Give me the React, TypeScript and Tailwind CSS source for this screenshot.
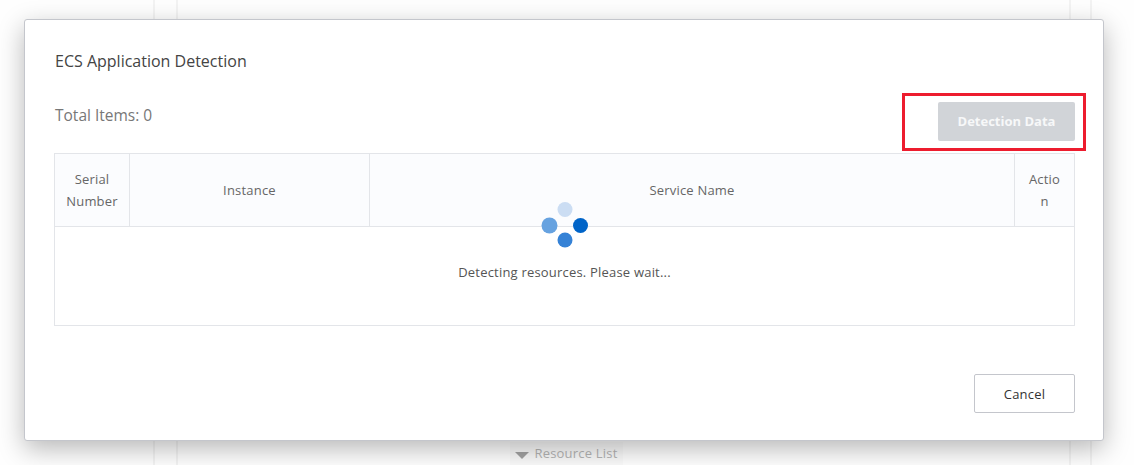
const font = { fontFamily: '"Open Sans", "Noto Sans", sans-serif' }

const dots = [
  { cx: 24, cy: 7.5, r: 7.5, fill: '#cbddf3' },
  { cx: 39.5, cy: 23.5, r: 7.5, fill: '#0064c8' },
  { cx: 24, cy: 38, r: 7.5, fill: '#3582d6' },
  { cx: 8.5, cy: 23.5, r: 8, fill: '#66a2e0' },
]

function Spinner() {
  return (
    <svg width="48" height="46" viewBox="0 0 48 46">
      {dots.map((d) => (
        <circle key={d.cx + '-' + d.cy} cx={d.cx} cy={d.cy} r={d.r} fill={d.fill} />
      ))}
    </svg>
  )
}

function Backdrop() {
  return (
    <div className="absolute inset-0 flex bg-[#fefefe] pl-[153px] pr-[42px]">
      <div className="flex flex-1 border-x-2 border-[#f3f3f3] pl-[21px] pr-[19px]">
        <div className="flex flex-1 flex-col items-center justify-end border-x-2 border-[#f3f3f3] pr-[114px]">
          <div className="flex h-[23px] items-center gap-[5px] bg-[#fafafa] px-[5px] pt-[1px] text-[13px] tracking-[0.2px] text-[#b5b5b5]">
            <span className="mt-[3px] h-0 w-0 border-x-[7px] border-t-[7px] border-x-transparent border-t-[#a3a3a3]" />
            Resource List
          </div>
        </div>
      </div>
    </div>
  )
}

export default function App() {
  return (
    <div className="relative h-[465px] w-[1134px] overflow-hidden" style={font}>
      <Backdrop />
      <div className="relative flex h-full items-start pl-[24px] pt-[19px]">
        <div className="flex h-[422px] w-[1080px] flex-col rounded-[3px] border border-[#c4c6cc] bg-white pl-[29px] pr-[28px] shadow-[0_8px_26px_rgba(0,0,0,0.28)]">
          <h2 className="mt-[29px] h-[24px] pl-[1px] text-[16px] leading-[24px] text-[#444]">ECS Application Detection</h2>
          <div className="relative mt-[30px] flex h-[29px] items-start justify-between">
            <span className="pl-[1px] text-[15.5px] leading-[24px] text-[#777]">Total Items: 0</span>
            <div className="absolute right-[-11px] top-[-10px] flex h-[58px] w-[184px] items-start justify-end border-[3px] border-[#ed1c2e] pr-[8px] pt-[6px]">
              <button className="h-[39px] w-[137px] rounded-[2px] bg-[#d1d4d8] text-[13px] font-bold text-[#f7f8f9]">
                Detection Data
              </button>
            </div>
          </div>
          <div className="relative mt-[21px] w-[1021px] border border-[#e3e5e9]">
            <div className="flex h-[73px] border-b border-[#e3e5e9] bg-[#fbfcfe] text-center text-[13px] leading-[22px] tracking-[0.2px] text-[#666]">
              <div className="flex w-[75px] items-center justify-center border-r border-[#e3e5e9]">
                Serial<br />Number
              </div>
              <div className="flex w-[240px] items-center justify-center border-r border-[#e3e5e9]">Instance</div>
              <div className="flex flex-1 items-center justify-center border-r border-[#e3e5e9]">Service Name</div>
              <div className="flex w-[59px] items-center justify-center">
                Actio<br />n
              </div>
            </div>
            <div className="h-[98px]" />
            <div className="absolute inset-x-0 top-[48px] flex flex-col items-center">
              <Spinner />
              <p className="mt-[13px] text-[13px] leading-[22px] tracking-[0.2px] text-[#555]">Detecting resources. Please wait...</p>
            </div>
          </div>
          <div className="mt-[48px] flex justify-end">
            <button className="h-[39px] w-[101px] rounded-[2px] border border-[#c4c6cc] bg-white pt-[2px] text-[13px] font-medium tracking-[0.2px] text-[#333]">
              Cancel
            </button>
          </div>
        </div>
      </div>
    </div>
  )
}
